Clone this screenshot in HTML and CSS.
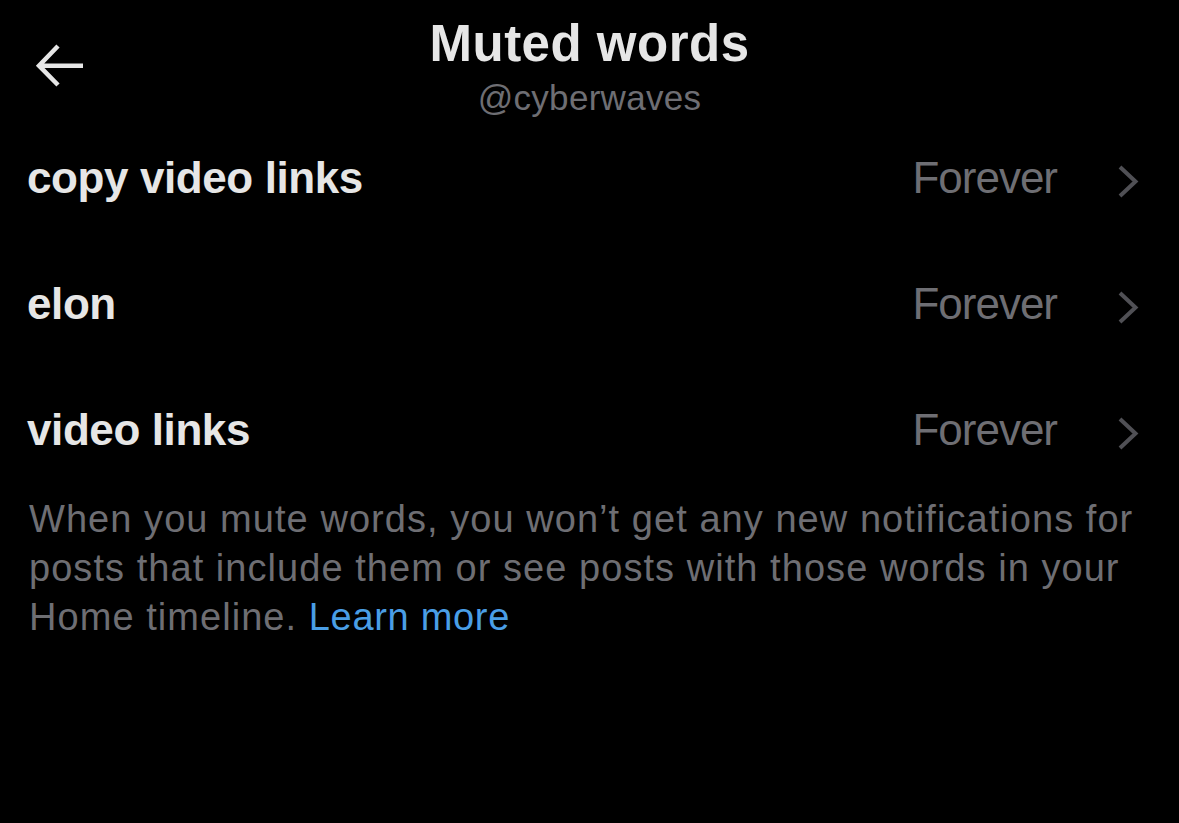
FILE: index.html
```html
<!DOCTYPE html>
<html lang="en">
<head>
<meta charset="utf-8">
<title>Muted words</title>
<link rel="stylesheet" href="styles.css">
</head>
<body>
<div class="screen">
  <header class="header">
    <div class="back">
      <svg class="back-icon" width="60" height="60" viewBox="0 0 60 60" aria-hidden="true">
        <path d="M28 10 L9 29.7 L28 49 M9 29.7 H53" fill="none" stroke="#e6e6e6" stroke-width="4.5" stroke-linejoin="miter"/>
      </svg>
    </div>
    <div class="titles">
      <div class="title">Muted words</div>
      <div class="handle">@cyberwaves</div>
    </div>
    <div class="spacer"></div>
  </header>

  <ul class="list">
    <li class="row">
      <span class="word">copy video links</span>
      <span class="duration">Forever</span>
      <svg class="chevron" width="24" height="36" viewBox="0 0 24 36" aria-hidden="true">
        <path d="M4 5 L19.5 19.5 L4 34" fill="none" stroke="#505055" stroke-width="4"/>
      </svg>
    </li>
    <li class="row">
      <span class="word">elon</span>
      <span class="duration">Forever</span>
      <svg class="chevron" width="24" height="36" viewBox="0 0 24 36" aria-hidden="true">
        <path d="M4 5 L19.5 19.5 L4 34" fill="none" stroke="#505055" stroke-width="4"/>
      </svg>
    </li>
    <li class="row">
      <span class="word">video links</span>
      <span class="duration">Forever</span>
      <svg class="chevron" width="24" height="36" viewBox="0 0 24 36" aria-hidden="true">
        <path d="M4 5 L19.5 19.5 L4 34" fill="none" stroke="#505055" stroke-width="4"/>
      </svg>
    </li>
  </ul>

  <p class="note">When you mute words, you won’t get any new notifications for posts that include them or see posts with those words in your Home timeline. <a class="link" href="#">Learn more</a></p>
</div>
</body>
</html>
```

FILE: styles.css
```css
html, body {
  margin: 0;
  padding: 0;
  background: #000;
}

body {
  font-family: "Liberation Sans", Arial, sans-serif;
  color: #e6e6e6;
  width: 1179px;
  height: 823px;
  overflow: hidden;
}

.screen {
  display: flex;
  flex-direction: column;
}

.header {
  display: grid;
  grid-template-columns: 1fr auto 1fr;
  align-items: start;
  padding-top: 16px;
  height: 99px;
}

.back {
  padding-left: 30px;
  padding-top: 20px;
}

.back-icon {
  display: block;
}

.titles {
  display: flex;
  flex-direction: column;
  align-items: center;
}

.title {
  font-size: 51px;
  line-height: 56px;
  font-weight: 700;
  letter-spacing: 0.5px;
  color: #e6e6e6;
}

.handle {
  margin-top: 9px;
  font-size: 35px;
  line-height: 34px;
  letter-spacing: 0.3px;
  color: #6e6e73;
}

.list {
  list-style: none;
  margin: 0;
  padding: 0;
}

.row {
  display: flex;
  align-items: center;
  height: 126px;
  padding: 0 39px 0 27px;
}

.word {
  font-size: 44px;
  line-height: 50px;
  font-weight: 700;
  letter-spacing: -0.4px;
  color: #e6e6e6;
}

.duration {
  margin-left: auto;
  margin-right: 59px;
  font-size: 44px;
  line-height: 50px;
  letter-spacing: -1px;
  color: #6e6e73;
}

.chevron {
  display: block;
  margin-top: 4px;
}

.note {
  margin: 2px 0 0;
  padding: 0 30px 0 29px;
  font-size: 38px;
  line-height: 49px;
  letter-spacing: 1.05px;
  color: #6e6e73;
}

.link {
  color: #4a9ee6;
  text-decoration: none;
  letter-spacing: 0.7px;
}
```
